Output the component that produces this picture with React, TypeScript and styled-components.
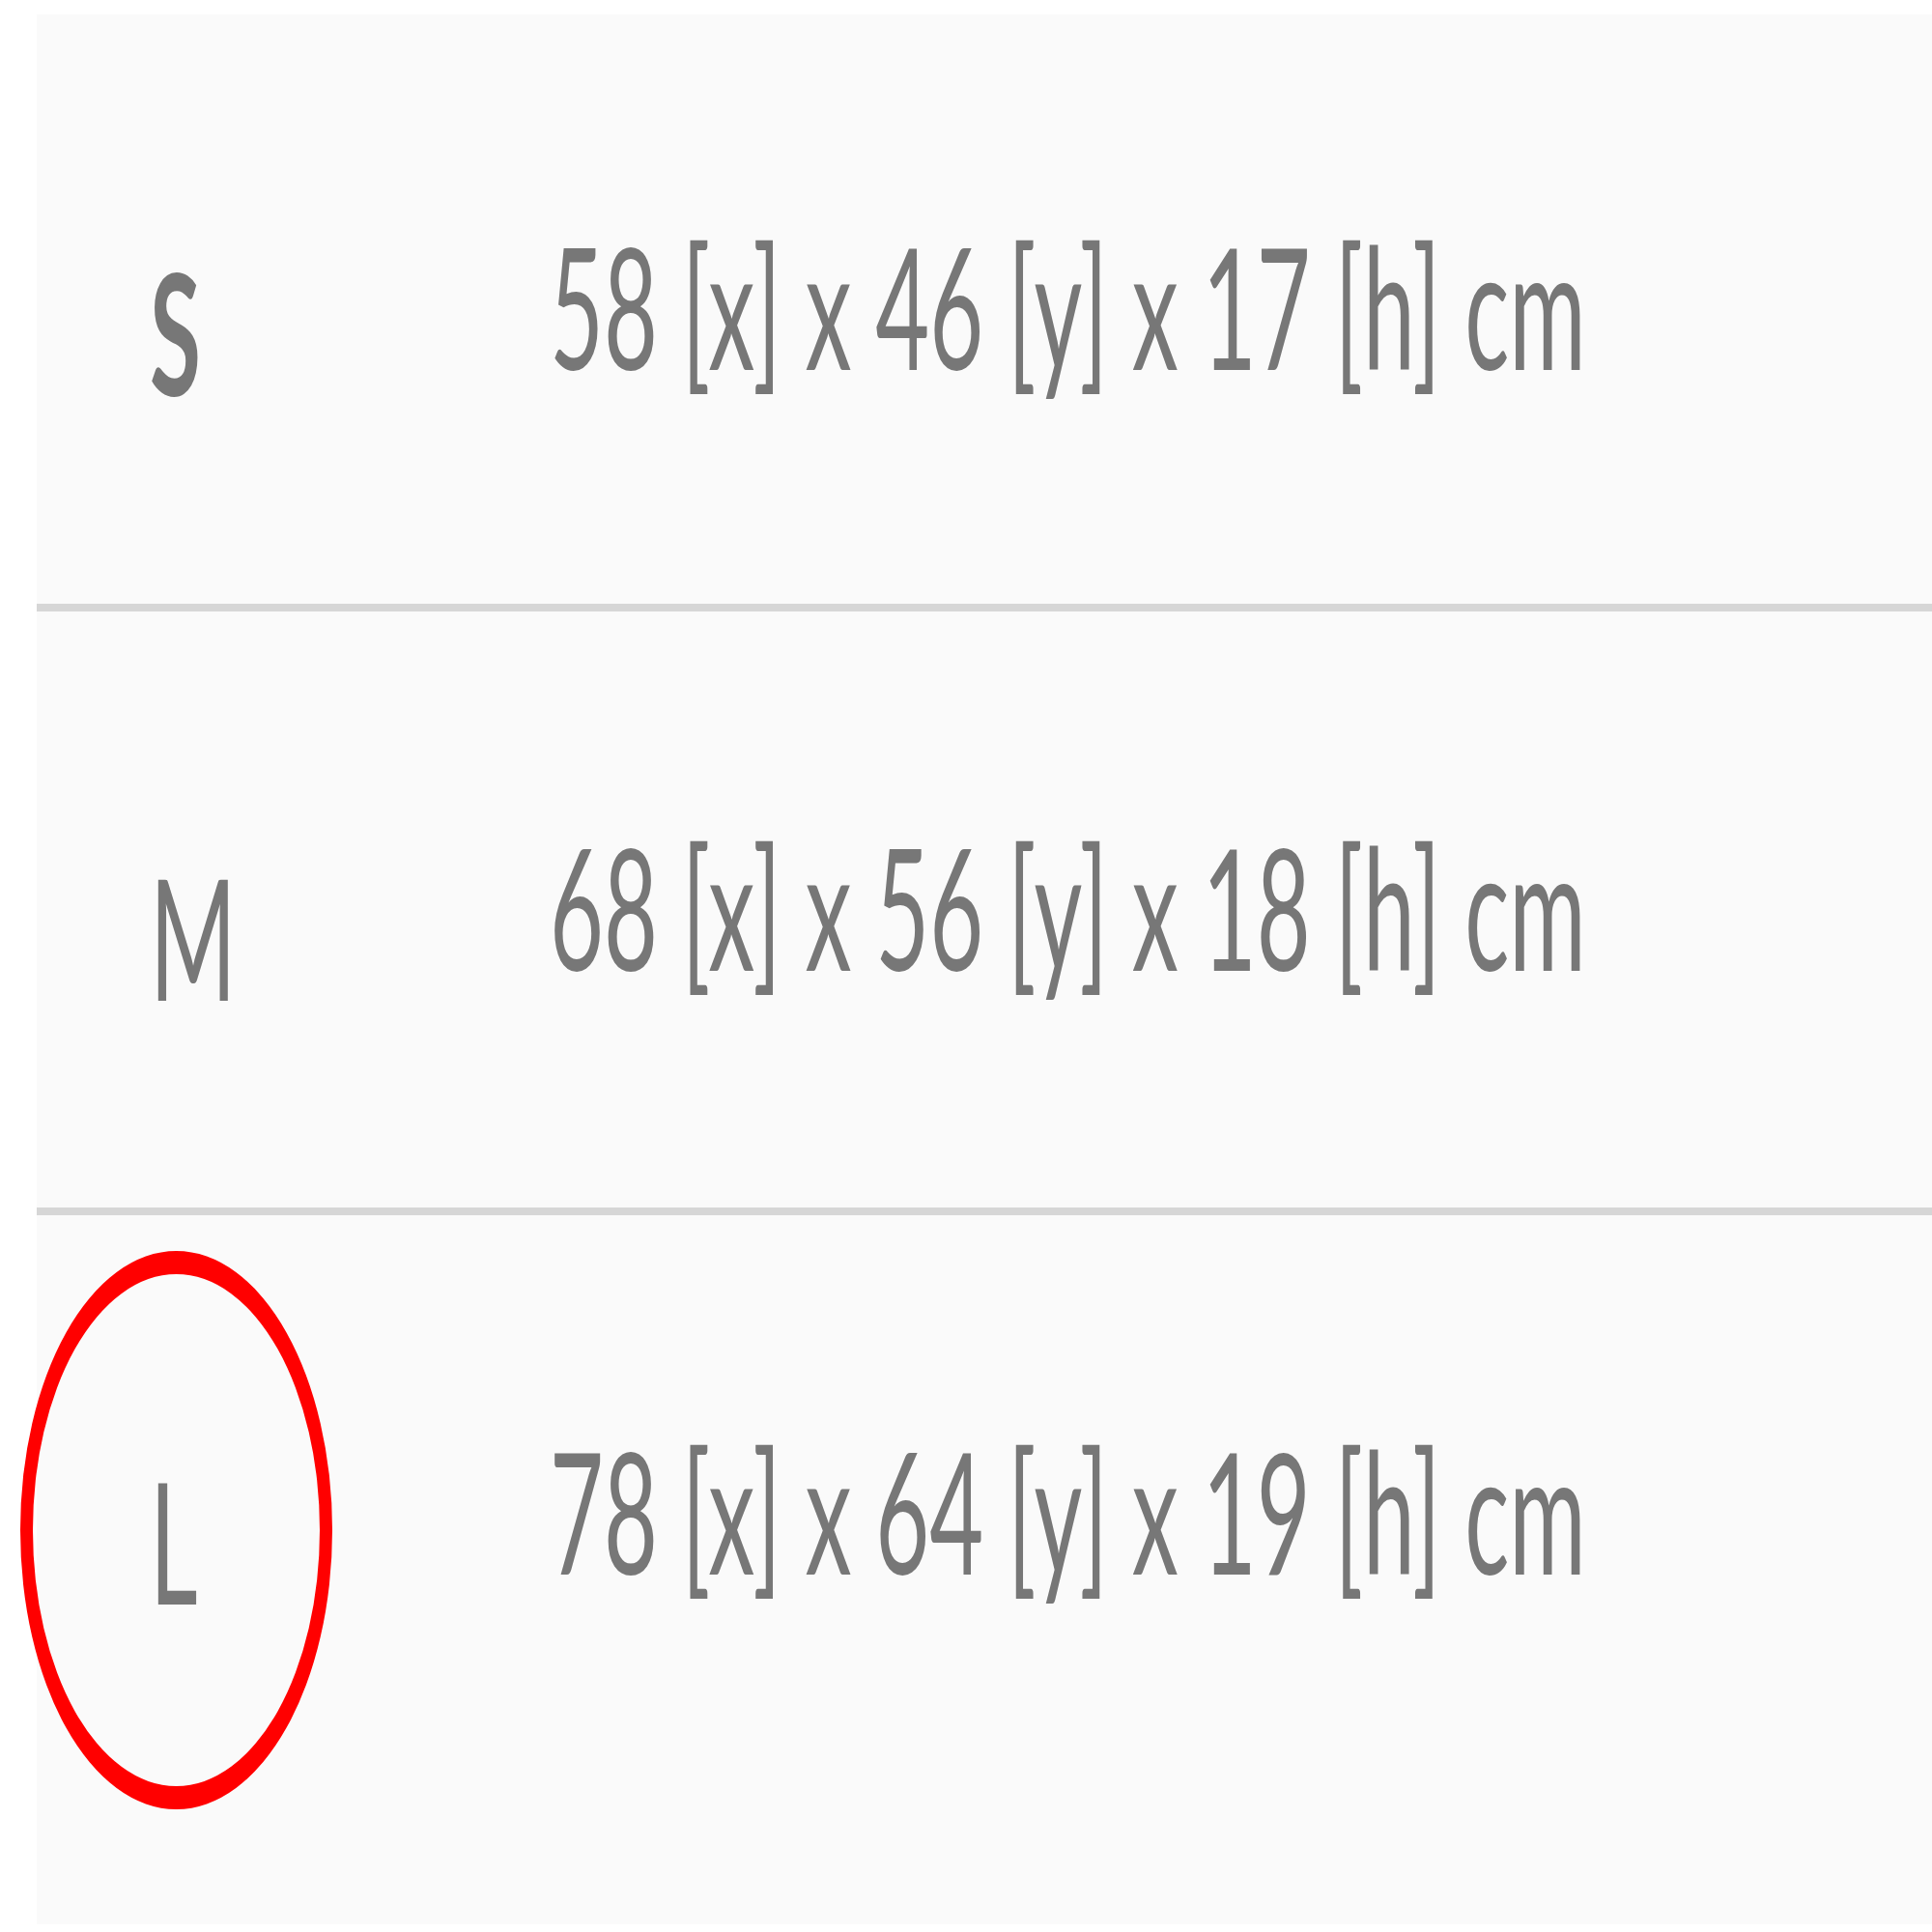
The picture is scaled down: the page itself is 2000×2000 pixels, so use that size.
import React from 'react';
import styled, { createGlobalStyle } from 'styled-components';

const Global = createGlobalStyle`
  html, body {
    margin: 0;
    padding: 0;
    background: #ffffff;
  }
  body {
    font-family: Lato, "Open Sans", "Liberation Sans", sans-serif;
  }
`;

const Page = styled.div`
  width: 2000px;
  box-sizing: border-box;
  padding: 15px 0 10px 38px;
  overflow: hidden;
`;

const Table = styled.div`
  background: #fafafa;
  padding-bottom: 117px;
`;

const Row = styled.div<{ $divider: boolean }>`
  position: relative;
  height: 617px;
  display: grid;
  grid-template-columns: 531px 1fr;
  align-items: center;
  border-bottom: ${(p) => (p.$divider ? '8px solid #d6d6d6' : 'none')};

  &:first-child {
    height: 610px;
  }
`;

const SizeCell = styled.div<{ $bold?: boolean }>`
  padding-left: 117px;
  padding-top: ${(p) => (p.$bold ? 46 : 54)}px;
`;

const DimsCell = styled.div`
  padding-bottom: 8px;
`;

const Label = styled.span<{ $bold?: boolean }>`
  display: inline-block;
  white-space: nowrap;
  font-size: 174px;
  line-height: 1;
  font-weight: ${(p) => (p.$bold ? 700 : 400)};
  color: #777777;
  transform: scaleX(0.555);
  transform-origin: left center;
`;

const Highlight = styled.div`
  position: absolute;
  left: -17px;
  top: 37px;
  width: 323px;
  height: 578px;
  box-sizing: border-box;
  border-style: solid;
  border-color: #ff0000;
  border-width: 24px 13px;
  border-radius: 50%;
  pointer-events: none;
`;

const rows = [
  { size: 'S', dims: '58 [x] x 46 [y] x 17 [h] cm', bold: true },
  { size: 'M', dims: '68 [x] x 56 [y] x 18 [h] cm' },
  { size: 'L', dims: '78 [x] x 64 [y] x 19 [h] cm', selected: true },
];

export default function App() {
  return (
    <>
      <Global />
      <Page>
        <Table>
          {rows.map((r, i) => (
            <Row key={r.size} $divider={i < rows.length - 1}>
              <SizeCell $bold={r.bold}>
                <Label $bold={r.bold}>{r.size}</Label>
              </SizeCell>
              <DimsCell>
                <Label>{r.dims}</Label>
              </DimsCell>
              {r.selected && <Highlight />}
            </Row>
          ))}
        </Table>
      </Page>
    </>
  );
}
